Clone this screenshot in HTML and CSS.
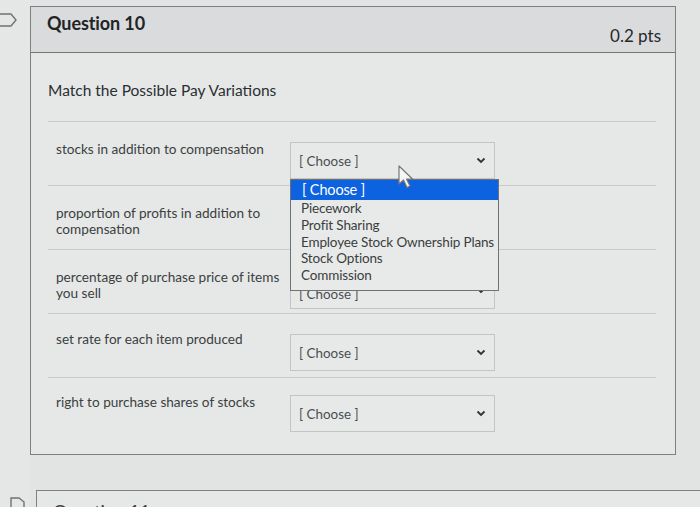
FILE: index.html
```html
<!DOCTYPE html>
<html>
<head>
<meta charset="utf-8">
<link rel="stylesheet" href="styles.css">
</head>
<body>
<div class="page">
  <aside class="sidebar">
    <svg class="flag flag-q10" width="18" height="16" viewBox="0 0 18 16"><path d="M-2 2 H11 L16 8 L11 14 H-2" fill="none" stroke="#6f7372" stroke-width="1.4"/></svg>
    <svg class="flag flag-q11" width="16" height="12" viewBox="0 0 16 12"><path d="M1 12 V1 H9 L14 5 V12" fill="none" stroke="#6f7372" stroke-width="1.4"/></svg>
  </aside>
  <main class="main">
    <section class="card">
      <header class="card-head">
        <h2 class="q-title">Question 10</h2>
        <span class="q-pts">0.2 pts</span>
      </header>
      <div class="card-body">
        <p class="prompt">Match the Possible Pay Variations</p>
        <div class="rows">
          <div class="row">
            <div class="row-text">stocks in addition to compensation</div>
            <div class="select-wrap">
              <div class="select"><span>[ Choose ]</span><svg class="chev" width="10" height="7" viewBox="0 0 10 7"><path d="M1.5 1.5 L5 5 L8.5 1.5" fill="none" stroke="#333" stroke-width="1.8"/></svg></div>
              <svg class="cursor" width="18" height="24" viewBox="0 0 18 24"><path d="M1 1 L1 19 L5.5 15 L9 22.5 L12 21 L8.5 14 L14.5 14 Z" fill="#f4f5f5" stroke="#777" stroke-width="1.2" stroke-linejoin="round"/></svg>
              <ul class="dropdown">
                <li class="opt active">[ Choose ]</li>
                <li class="opt">Piecework</li>
                <li class="opt">Profit Sharing</li>
                <li class="opt">Employee Stock Ownership Plans</li>
                <li class="opt">Stock Options</li>
                <li class="opt">Commission</li>
              </ul>
            </div>
          </div>
          <div class="row">
            <div class="row-text">proportion of profits in addition to compensation</div>
            <div class="select-wrap">
              <div class="select"><span>[ Choose ]</span><svg class="chev" width="10" height="7" viewBox="0 0 10 7"><path d="M1.5 1.5 L5 5 L8.5 1.5" fill="none" stroke="#333" stroke-width="1.8"/></svg></div>
            </div>
          </div>
          <div class="row">
            <div class="row-text">percentage of purchase price of items you sell</div>
            <div class="select-wrap">
              <div class="select select-low"><span>[ Choose ]</span><svg class="chev" width="10" height="7" viewBox="0 0 10 7"><path d="M1.5 1.5 L5 5 L8.5 1.5" fill="none" stroke="#333" stroke-width="1.8"/></svg></div>
            </div>
          </div>
          <div class="row">
            <div class="row-text">set rate for each item produced</div>
            <div class="select-wrap">
              <div class="select"><span>[ Choose ]</span><svg class="chev" width="10" height="7" viewBox="0 0 10 7"><path d="M1.5 1.5 L5 5 L8.5 1.5" fill="none" stroke="#333" stroke-width="1.8"/></svg></div>
            </div>
          </div>
          <div class="row last">
            <div class="row-text">right to purchase shares of stocks</div>
            <div class="select-wrap">
              <div class="select"><span>[ Choose ]</span><svg class="chev" width="10" height="7" viewBox="0 0 10 7"><path d="M1.5 1.5 L5 5 L8.5 1.5" fill="none" stroke="#333" stroke-width="1.8"/></svg></div>
            </div>
          </div>
        </div>
      </div>
    </section>
    <section class="card card-next">
      <header class="card-head plain">
        <h2 class="q-title">Question 11</h2>
      </header>
    </section>
  </main>
</div>
</body>
</html>
```

FILE: styles.css
```css
* { box-sizing: border-box; }
html, body {
  margin: 0;
  padding: 0;
  width: 700px;
  height: 507px;
  overflow: hidden;
  background: #e2e4e3;
  font-family: Lato, "Open Sans", "Liberation Sans", sans-serif;
  color: #2d3336;
}
.page {
  display: flex;
  height: 507px;
}
.sidebar {
  width: 30px;
  flex: none;
  position: relative;
  background: #e5e7e6;
}
.flag { position: absolute; }
.flag-q10 { left: 0; top: 12px; }
.flag-q11 { left: 10px; top: 497px; }
.main {
  width: 646px;
  display: flex;
  flex-direction: column;
  padding-top: 6px;
}
.card {
  border: 1px solid #7d8080;
  background: #e6e8e7;
}
.card-head {
  height: 46px;
  background: #d9dbdc;
  border-bottom: 1px solid #737676;
  display: flex;
  justify-content: space-between;
  align-items: flex-start;
  padding: 5px 14px 0 16px;
}
.card-head.plain {
  background: #e6e8e7;
  border-bottom: none;
  height: 30px;
}
.q-title {
  margin: 0;
  font-size: 18px;
  line-height: 22px;
  font-weight: 700;
  color: #1f2426;
  letter-spacing: -0.1px;
}
.q-pts {
  margin-top: 13px;
  font-size: 17px;
  line-height: 22px;
  color: #25292b;
}
.card-body {
  padding: 0 19px 0 17px;
}
.prompt {
  margin: 0;
  padding: 27px 0 21px 0;
  font-size: 15.5px;
  line-height: 20px;
  color: #2a2f31;
}
.rows {
  border-top: 1px solid #c9cbca;
}
.row {
  height: 64px;
  border-bottom: 1px solid #c9cbca;
  display: flex;
  align-items: flex-start;
}
.row.last {
  height: 76px;
  border-bottom: none;
}
.row-text {
  width: 242px;
  flex: none;
  padding: 19px 4px 0 8px;
  font-size: 13.6px;
  line-height: 16px;
  color: #3b3f41;
}
.row:nth-child(4) .row-text { padding-top: 17px; }
.row:nth-child(5) .row-text { padding-top: 16px; }
.select-wrap {
  position: relative;
  margin-top: 20px;
  width: 205px;
}
.row:nth-child(5) .select-wrap { margin-top: 17px; }
.select {
  height: 37px;
  border: 1px solid #c3c5c5;
  background: #e7e9e8;
  display: flex;
  align-items: center;
  justify-content: space-between;
  padding: 0 8px 0 8px;
  font-size: 13.4px;
  color: #4a4e50;
}
.select-low {
  margin-top: 2px;
}
.select-low span { padding-top: 6px; }
.chev { flex: none; }
.cursor {
  position: absolute;
  left: 108px;
  top: 23px;
  z-index: 3;
}
.dropdown {
  position: absolute;
  top: 37px;
  left: 0;
  width: 209px;
  margin: 0;
  padding: 0 0 6px 0;
  list-style: none;
  background: #e8eae9;
  border: 1px solid #6e7272;
  z-index: 2;
}
.opt {
  height: 16.8px;
  line-height: 16.8px;
  padding-left: 10px;
  font-size: 13.5px;
  color: #3a3e40;
  white-space: nowrap;
  letter-spacing: -0.15px;
}
.opt.active {
  height: 20px;
  line-height: 19px;
  padding-left: 11px;
  background: #0d62e0;
  color: #ffffff;
  font-size: 14.5px;
}
.card-next {
  margin-top: 35px;
  margin-left: 6px;
  width: 680px;
  flex: none;
  border-right: none;
}
.card-next .q-title {
  font-weight: 400;
  color: #3a3e40;
  padding-top: 4px;
}
```
